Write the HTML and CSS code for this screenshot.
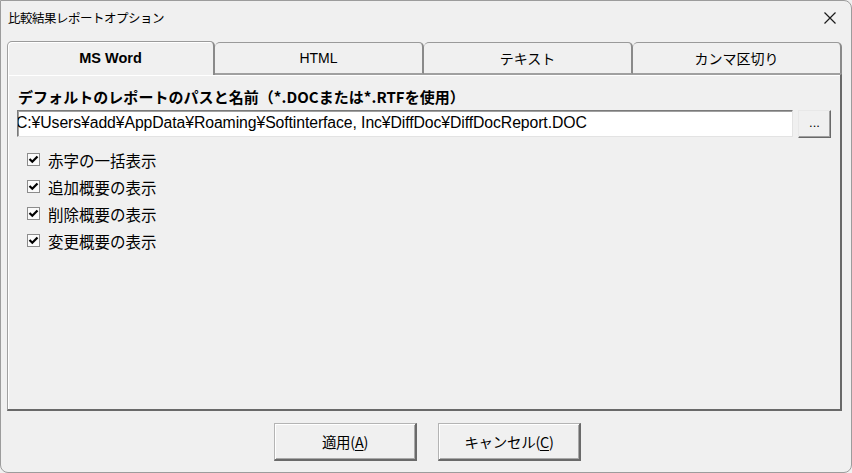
FILE: index.html
```html
<!DOCTYPE html>
<html lang="ja">
<head>
<meta charset="utf-8">
<link rel="stylesheet" href="styles.css">
</head>
<body>
<div class="window">
  <div class="titlebar">
    <span class="title">比較結果レポートオプション</span>
    <svg class="close" width="14" height="14" viewBox="0 0 14 14"><path d="M1.5 1.5L12.5 12.5M12.5 1.5L1.5 12.5" stroke="#1a1a1a" stroke-width="1.2" fill="none"/></svg>
  </div>
  <div class="tabs">
    <div class="tab active">MS Word</div>
    <div class="tab t2">HTML</div>
    <div class="tab t3">テキスト</div>
    <div class="tab t4">カンマ区切り</div>
  </div>
  <div class="panel">
    <div class="label">デフォルトのレポートのパスと名前（*.DOCまたは*.RTFを使用）</div>
    <div class="pathrow">
      <div class="input"><span class="path">C:¥Users¥add¥AppData¥Roaming¥Softinterface, Inc¥DiffDoc¥DiffDocReport.DOC</span></div>
      <div class="browse">...</div>
    </div>
    <div class="checks">
      <div class="check"><span class="box"><svg width="11" height="11" viewBox="0 0 11 11"><path d="M1.5 5L4.3 7.8L9.5 2.4" stroke="#000" stroke-width="2.2" fill="none"/></svg></span><span>赤字の一括表示</span></div>
      <div class="check"><span class="box"><svg width="11" height="11" viewBox="0 0 11 11"><path d="M1.5 5L4.3 7.8L9.5 2.4" stroke="#000" stroke-width="2.2" fill="none"/></svg></span><span>追加概要の表示</span></div>
      <div class="check"><span class="box"><svg width="11" height="11" viewBox="0 0 11 11"><path d="M1.5 5L4.3 7.8L9.5 2.4" stroke="#000" stroke-width="2.2" fill="none"/></svg></span><span>削除概要の表示</span></div>
      <div class="check"><span class="box"><svg width="11" height="11" viewBox="0 0 11 11"><path d="M1.5 5L4.3 7.8L9.5 2.4" stroke="#000" stroke-width="2.2" fill="none"/></svg></span><span>変更概要の表示</span></div>
    </div>
  </div>
  <div class="buttons">
    <div class="btn">適用(<u>A</u>)</div>
    <div class="btn">キャンセル(<u>C</u>)</div>
  </div>
</div>
</body>
</html>
```
FILE: styles.css
```css
* { box-sizing: border-box; }
html, body { margin: 0; padding: 0; background: #f0f0f0; }
body { width: 852px; height: 473px; overflow: hidden; font-family: "Noto Sans CJK JP", "Liberation Sans", sans-serif; color: #000; }
.window {
  width: 852px; height: 473px;
  background: #f0f0f0;
  border: 1px solid #9c9c9c;
  border-radius: 0 8px 8px 8px;
  display: flex; flex-direction: column;
}
.titlebar {
  height: 33px;
  display: flex; align-items: center; justify-content: space-between;
  padding: 0 14px 0 7px;
}
.title { font-size: 12.5px; letter-spacing: -0.5px; }
.close { display: block; }
.tabs {
  height: 40px;
  display: flex; align-items: flex-end;
  margin-left: 6px;
  padding-top: 6px;
}
.tab {
  height: 32px;
  display: flex; align-items: center; justify-content: center;
  font-family: "Liberation Sans", "Noto Sans CJK JP", sans-serif;
  font-size: 14px;
  border: 1px solid #9a9a9a;
  border-bottom: none;
  border-right: 2px solid #8a8a8a;
  border-radius: 5px 5px 0 0;
  background: #f0f0f0;
}
.tab.active {
  width: 208px; height: 34px;
  font-weight: bold; font-size: 14.5px;
  border-left: 1px solid #a0a0a0;
  box-shadow: inset 1px 1px 0 #fff;
  position: relative; z-index: 2;
  margin-bottom: -1px;
  padding-bottom: 2px;
}
.tab.t2, .tab.t3, .tab.t4 { width: 209px; border-left: none; }
.tabs .tab:not(.active) { border-bottom: 1px solid #a0a0a0; height: 32px; }
.panel {
  width: 835px; height: 337px;
  margin-left: 6px;
  border-top: 1px solid #a0a0a0;
  border-left: 1px solid #a0a0a0;
  border-right: 2px solid #696969;
  border-bottom: 2px solid #696969;
  box-shadow: inset 1px 1px 0 #fff;
  padding: 11px 8px 0 10px;
  position: relative; z-index: 1;
}
.label {
  font-weight: bold; font-size: 15px; letter-spacing: 0.05px;
  height: 24px; line-height: 22px;
}
.pathrow { display: flex; align-items: flex-start; gap: 5px; margin-left: -1px; }
.input {
  width: 776px; height: 27px;
  background: #fff;
  border-top: 1px solid #7a7a7a;
  border-left: 1px solid #7a7a7a;
  border-bottom: 1px solid #e3e3e3;
  border-right: 1px solid #e3e3e3;
  box-shadow: inset 1px 1px 0 #a0a0a0;
  overflow: hidden; white-space: nowrap;
  padding-left: 1px;
  font-family: "Liberation Sans", sans-serif;
  font-size: 15.8px; line-height: 24px;
  letter-spacing: -0.1px;
}
.path { margin-left: -3px; }
.browse {
  width: 33px; height: 28px;
  border-top: 1px solid #e8e8e8; border-left: 1px solid #e8e8e8;
  border-right: 1px solid #696969; border-bottom: 1px solid #696969;
  box-shadow: inset -1px -1px 0 #a0a0a0;
  display: flex; align-items: center; justify-content: center;
  font-family: "Liberation Sans", sans-serif; font-size: 13px; padding-bottom: 3px;
}
.checks { margin-top: 8px; margin-left: 9px; display: flex; flex-direction: column; }
.check { height: 27px; display: flex; align-items: center; gap: 8px; font-size: 15.5px; }
.box {
  width: 13px; height: 13px;
  border: 1px solid #8c8c8c;
  background: #fbfbfb;
  display: flex; align-items: center; justify-content: center;
  margin-top: -1px;
}
.box svg { display: block; }
.buttons {
  flex: 1;
  display: flex; justify-content: center; gap: 21px;
  padding-top: 12px; padding-left: 3px;
}
.btn {
  width: 143px; height: 38px;
  border-top: 1px solid #b4b4b4; border-left: 1px solid #b4b4b4;
  border-right: 2px solid #6a6a6a; border-bottom: 2px solid #6a6a6a;
  box-shadow: inset 1px 1px 0 #fff, inset -1px -1px 0 #a8a8a8;
  background: #f0f0f0;
  display: flex; align-items: center; justify-content: center;
  font-size: 14.5px; font-family: "Noto Sans CJK JP", "Liberation Sans", sans-serif;
  letter-spacing: -0.3px;
}
.btn u { text-underline-offset: 2px; }
```
